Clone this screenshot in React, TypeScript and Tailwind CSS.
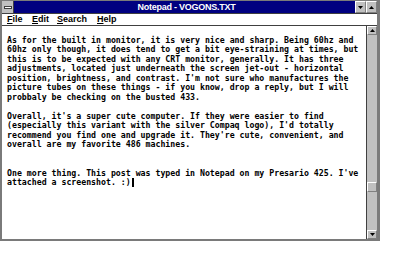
import React from "react";

const lines = [
  "As for the built in monitor, it is very nice and sharp. Being 60hz and",
  "60hz only though, it does tend to get a bit eye-straining at times, but",
  "this is to be expected with any CRT monitor, generally. It has three",
  "adjustments, located just underneath the screen jet-out - horizontal",
  "position, brightness, and contrast. I'm not sure who manufactures the",
  "picture tubes on these things - if you know, drop a reply, but I will",
  "probbaly be checking on the busted 433.",
  "",
  "Overall, it's a super cute computer. If they were easier to find",
  "(especially this variant with the silver Compaq logo), I'd totally",
  "recommend you find one and upgrade it. They're cute, convenient, and",
  "overall are my favorite 486 machines.",
  "",
  "",
  "One more thing. This post was typed in Notepad on my Presario 425. I've",
];

function Btn({ children, className = "" }: { children?: React.ReactNode; className?: string }) {
  return (
    <div
      className={
        "flex items-center justify-center bg-[#c0c0c0] border-t border-l border-t-white border-l-white border-b border-r border-b-[#808080] border-r-[#808080] " +
        className
      }
    >
      {children}
    </div>
  );
}

function TriUp() {
  return (
    <svg width="5" height="3" viewBox="0 0 5 3">
      <polygon points="2.5,0 5,3 0,3" fill="#000" />
    </svg>
  );
}
function TriDown() {
  return (
    <svg width="5" height="3" viewBox="0 0 5 3">
      <polygon points="0,0 5,0 2.5,3" fill="#000" />
    </svg>
  );
}

function MenuItem({ first, rest, w }: { first: string; rest: string; w: string }) {
  return (
    <div className={"shrink-0 " + w}>
      <span className="underline underline-offset-1 decoration-1">{first}</span>
      {rest}
    </div>
  );
}

export default function App() {
  return (
    <div className="w-[400px] h-[276px] bg-white overflow-hidden">
      <div className="w-[380px] h-[241px] flex flex-col border-t border-l-2 border-r-[3px] border-b-2 border-[#7a7a7a] bg-white">
        {/* Title bar */}
        <div className="flex h-[12px] shrink-0">
          <div className="w-[12px] h-[12px] bg-[#c0c0c0] flex items-center justify-center border-r border-[#404040]">
            <div className="w-[8px] h-[3px] bg-white border border-[#404040]" />
          </div>
          <div
            className="flex-1 bg-[#000080] text-white text-[9px] font-bold tracking-[-0.25px] flex items-center justify-center leading-none pl-[4px]"
            style={{ fontFamily: '"Liberation Sans", Arial, sans-serif' }}
          >
            Notepad - VOGONS.TXT
          </div>
          <Btn className="w-[11px] h-[12px]">
            <TriDown />
          </Btn>
          <Btn className="w-[11px] h-[12px]">
            <TriUp />
          </Btn>
        </div>
        <div className="h-px bg-[#404040] shrink-0" />
        {/* Menu bar */}
        <div
          className="flex h-[11px] shrink-0 items-center pl-[5px] text-[9px] font-bold text-black leading-none bg-white"
          style={{ fontFamily: '"Liberation Sans", Arial, sans-serif' }}
        >
          <MenuItem first="F" rest="ile" w="w-[25px]" />
          <MenuItem first="E" rest="dit" w="w-[25px]" />
          <MenuItem first="S" rest="earch" w="w-[40px]" />
          <MenuItem first="H" rest="elp" w="w-[25px]" />
        </div>
        <div className="h-px bg-[#404040] shrink-0" />
        {/* Edit area */}
        <div className="flex flex-1 min-h-0">
          <div
            className="flex-1 bg-white pl-[5px] pt-[10px] text-[8.22px] font-bold leading-[9.47px] text-black whitespace-pre overflow-hidden"
            style={{ fontFamily: '"DejaVu Sans Mono", "Liberation Mono", monospace' }}
          >
            {lines.map((l, i) => (
              <div key={i} className="h-[9.47px]">
                {l}
              </div>
            ))}
            <div className="h-[9.47px] flex items-center">
              <span>attached a screenshot. :)</span>
              <span className="inline-block w-[2px] h-[9px] bg-black ml-[1px]" />
            </div>
          </div>
          {/* Scrollbar */}
          <div className="w-[11px] flex flex-col border-l border-[#404040] bg-[#c0c0c0]">
            <Btn className="w-[10px] h-[9px] shrink-0">
              <TriUp />
            </Btn>
            <div className="flex-1 flex flex-col">
              <div className="h-[147px]" />
              <Btn className="w-[10px] h-[10px] shrink-0 border-y border-y-[#404040]" />
            </div>
            <Btn className="w-[10px] h-[9px] shrink-0">
              <TriDown />
            </Btn>
          </div>
        </div>
      </div>
    </div>
  );
}
